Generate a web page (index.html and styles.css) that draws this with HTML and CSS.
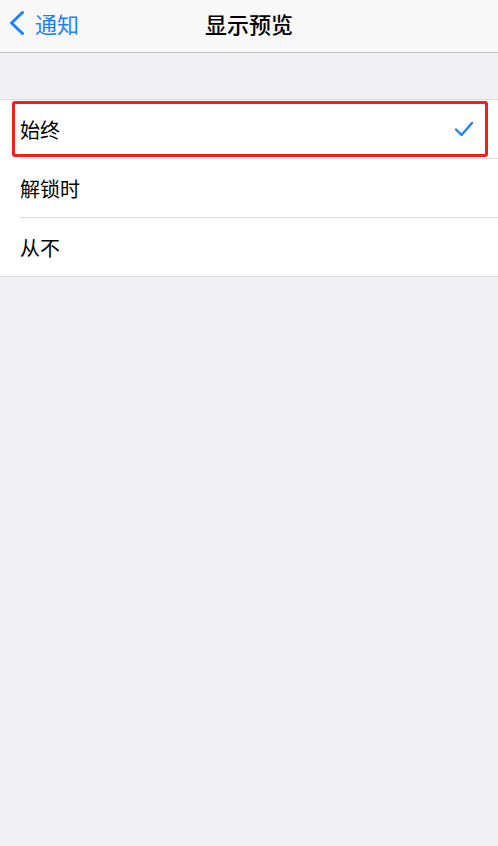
FILE: index.html
```html
<!DOCTYPE html>
<html lang="zh">
<head>
    <meta charset="utf-8">
    <title>显示预览</title>
    <link rel="stylesheet" href="styles.css">
</head>
<body>
    <div class="navbar">
        <a class="back" href="#">
            <svg class="chevron" width="16" height="24" viewBox="0 0 16 24">
                <path d="M13.5 1.5 L2.5 12 L13.5 22.5" fill="none" stroke="#1a82fb" stroke-width="3" stroke-linecap="round" stroke-linejoin="round"/>
            </svg>
            <span>通知</span>
        </a>
        <div class="title">显示预览</div>
    </div>

    <div class="group">
        <div class="row selected">
            <span class="label">始终</span>
            <svg class="check" width="20" height="16" viewBox="0 0 20 16">
                <path d="M2 8.5 L7.5 14 L18 2" fill="none" stroke="#1a82fb" stroke-width="2.4" stroke-linecap="round" stroke-linejoin="round"/>
            </svg>
        </div>
        <div class="row">
            <span class="label">解锁时</span>
        </div>
        <div class="row">
            <span class="label">从不</span>
        </div>
    </div>
</body>
</html>
```

FILE: styles.css
```css
body {
    margin: 0;
    background-color: #f1f0f5;
    font-family: "Noto Sans CJK SC", "Noto Sans", sans-serif;
    height: 846px;
}
.navbar {
    position: relative;
    height: 46px;
    padding-bottom: 6px;
    background-color: #f8f8f8;
    border-bottom: 1px solid #c4c4c6;
    display: flex;
    align-items: center;
    justify-content: center;
}
.back {
    position: absolute;
    left: 9px;
    top: 0;
    height: 46px;
    display: flex;
    align-items: center;
    gap: 10px;
    color: #1a82fb;
    text-decoration: none;
    font-size: 22px;
}
.title {
    font-size: 22px;
    font-weight: 500;
    color: #000;
}
.group {
    margin-top: 46px;
    background-color: #fff;
    border-top: 1px solid #dcdcde;
    border-bottom: 1px solid #dcdcde;
}
.row {
    position: relative;
    height: 58px;
    margin-left: 20px;
    padding-right: 24px;
    display: flex;
    align-items: center;
    justify-content: space-between;
    border-bottom: 1px solid #dddde0;
    font-size: 20px;
    color: #000;
}
.row:last-child {
    border-bottom: none;
}
.selected::after {
    content: "";
    position: absolute;
    left: -8px;
    right: 10px;
    top: 1px;
    bottom: 1px;
    border: 3px solid #f41f18;
    border-radius: 3px;
}
.check {
    display: block;
}
```
